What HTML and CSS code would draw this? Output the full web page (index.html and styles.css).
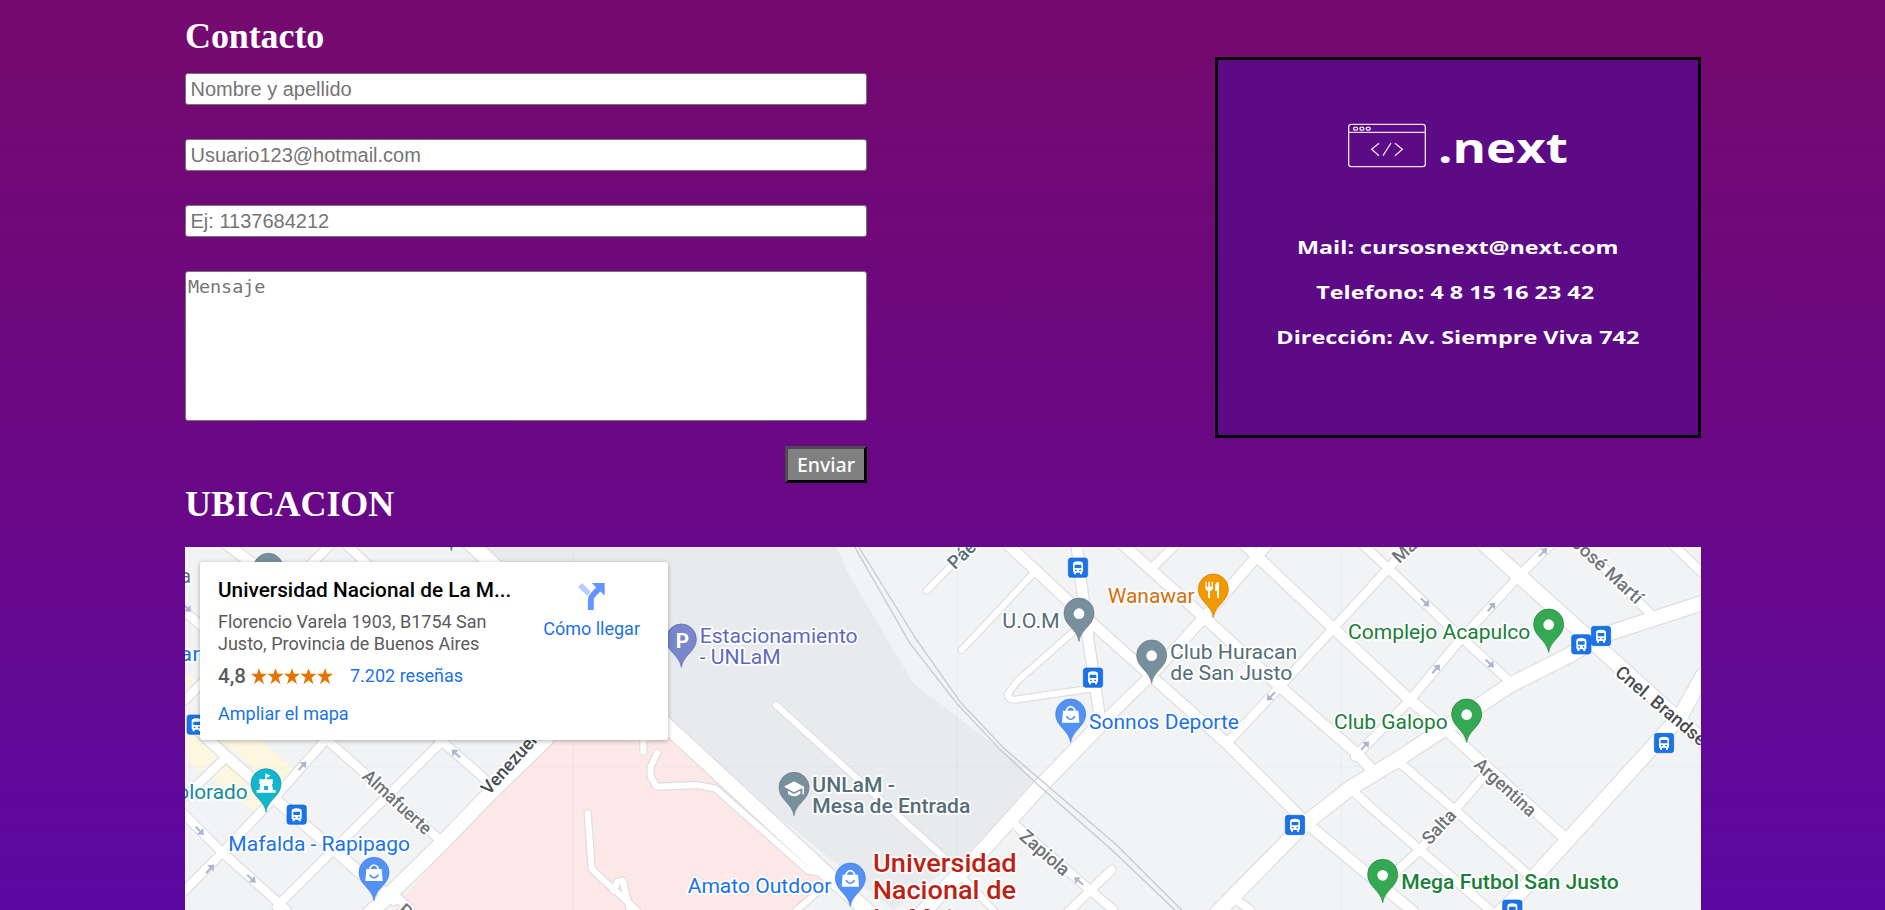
FILE: index.html
```html
<!DOCTYPE html>
<html lang="es">
<head>
<meta charset="utf-8">
<title>Contacto</title>
<link rel="stylesheet" href="styles.css">
</head>
<body>
<main class="page">
  <section class="contact">
    <form class="form">
      <h2 class="title">Contacto</h2>
      <input class="field" type="text" placeholder="Nombre y apellido">
      <input class="field" type="text" placeholder="Usuario123@hotmail.com">
      <input class="field" type="text" placeholder="Ej: 1137684212">
      <textarea class="message" placeholder="Mensaje"></textarea>
      <button class="send" type="button">Enviar</button>
    </form>
    <div class="card">
      <svg class="card-art" viewBox="54 60 1440 1125">
        <g class="logo">
          <rect x="446" y="253" width="230" height="127" rx="8"/>
          <path d="M446 277H676"/>
          <ellipse cx="467" cy="266" rx="6" ry="4.500"/><ellipse cx="486" cy="266" rx="6" ry="4.500"/><ellipse cx="505" cy="266" rx="6" ry="4.500"/>
          <path d="M537 310L515 328L537 347M573 309L549 347M585 310L607 328L585 347"/>
        </g>
        <text class="brand" x="714" y="369" textLength="390" lengthAdjust="spacingAndGlyphs">.next</text>
        <g class="info">
          <text x="291" y="642" textLength="964" lengthAdjust="spacingAndGlyphs">Mail: cursosnext@next.com</text>
          <text x="349" y="777" textLength="833" lengthAdjust="spacingAndGlyphs">Telefono: 4 8 15 16 23 42</text>
          <text x="229" y="912" textLength="1089" lengthAdjust="spacingAndGlyphs">Dirección: Av. Siempre Viva 742</text>
        </g>
      </svg>
    </div>
  </section>
  <h2 class="title location">UBICACION</h2>
  <section class="map">
    <svg class="map-art" viewBox="15 21 4548 1089">
      <defs>
        <g id="path-roads">
          <path d="M1390 590V635M1432 638L1412 680V710L1430 740L1550 735L1605 745L1885 992L1940 1000M1223 820L1235 985L1248 1000L1370 1110M1300 1052L1312 1025L1328 1022L1350 1110"/>
          <path d="M1788 495L2290 950L2440 1110M2240 152L2370 21M2565 95L2345 330M2680 275L2510 425L2483 463Q2485 480 2505 479L2740 445M1920 1050L1850 1110"/>
        </g>
        <g id="small-roads">
          <path d="M15 215L90 280M450 15L385 80M500 15L580 90M790 600L290 1100M770 590L935 735M15 825L130 940L320 1110M15 770L140 650M15 480L80 415M445 590L300 755L130 935L0 1065M430 590L780 900M2500 850L2730 1050L2800 1110M2795 990L2665 1115M2980 21L2915 85M4480 15L4563 95M3170 1080L3210 1110M640 1060L690 1110"/>
          <path d="M3140 610L3300 440L3460 265L3625 85L3690 15M3550 15L3630 90L3840 290L3990 425M4110 15L4020 105L3840 300L3690 480L3525 650M4410 220L4200 15M3650 660L3830 815L4040 1000M3920 700L3720 930L3600 1040M3510 745L3570 800L3720 930L3930 1110"/>
        </g>
        <g id="mid-roads">
          <path d="M130 5L230 80M60 575L140 650L300 790L560 1015L640 1080M2485 15L2720 235L2910 405L3140 610L3380 850L3560 1000L3700 1115M2830 15L3070 230L3300 440L3530 640L3590 705M3195 15L3460 265L3690 480L3810 580L4150 890M2760 555L2920 400L3070 235L3230 50L3260 15"/>
          <path d="M2690 15L2725 300L2760 535"/>
        </g>
        <g id="big-roads">
          <path d="M860 0L1464 560L1950 1010L2070 1120M1100 595L930 760L780 915L570 1120M2760 555L2580 740L2400 940L2320 1020L2230 1115M3915 15L4210 280L4580 615M4570 188L4270 285L4170 345L3990 435L3810 555L3650 660L3510 745L3370 855L3110 1120M4570 405L4500 530L4000 1080L3960 1120"/>
        </g>
        <path id="pin" d="M0 85C-5 48-45 38-45 0A45 45 0 0 1 45 0C45 38 5 48 0 85Z"/>
        <g id="bag"><path fill="#fff" d="M-23-10H23L26 26H-26Z"/><path class="bag-line" d="M-12-8V-14Q0-30 12-14V-8"/><path class="bag-smile" d="M-13 7Q0 26 13 7"/></g>
        <g id="bus"><rect class="bus-bg" x="-29" y="-29" width="58" height="58" rx="8"/><path fill="#fff" fill-rule="evenodd" d="M-15-11Q-15-19 0-19T15-11V11Q15 14 12 15V20H6V15H-6V20H-12V15Q-15 14-15 11ZM-10-9V1H10V-9ZM-9 6V10H-4V6ZM4 6V10H9V6Z"/></g>
        <path id="arrow" d="M-17-3H2V-13L18 0L2 13V3H-17Z"/>
      </defs>
      <rect class="land" x="15" y="21" width="4548" height="1089"/>
      <path class="campus" d="M880 21H1970L2010 110L2200 430L2510 665L2570 740L2340 960L2140 1110L1464 560Z"/>
      <path class="hospital" d="M640 1110L930 770L1100 590H1480L1950 1010L1850 1110Z"/>
      <path class="shops" d="M15 395L80 450V600L130 640L60 695L15 650V530L60 540V470L15 490ZM80 590H230L345 690L300 745L145 620ZM140 655L275 775L225 818L95 712Z"/>
      <path class="grid" d="M28 21V1110M1180 21V1110M2332 21V1110M3484 21V1110M15 680H4563"/>
      <g class="road casing"><use href="#path-roads" class="w-path"/><use href="#small-roads" class="w-small"/><use href="#mid-roads" class="w-mid"/><use href="#big-roads" class="w-big"/></g>
      <g class="road"><use href="#path-roads" class="w-path"/><use href="#small-roads" class="w-small"/><use href="#mid-roads" class="w-mid"/><use href="#big-roads" class="w-big"/></g>
      <path class="rail" d="M2024 21L2190 310L2330 490L2460 628L2585 745L2790 925L2985 1110M2036 21L2210 300L2340 485L2475 628L2600 735L2810 915L3005 1110"/>
      <g class="arrows">
        <use href="#arrow" transform="translate(367 678) rotate(-47)"/><use href="#arrow" transform="translate(90 987) rotate(-47)"/>
        <use href="#arrow" transform="translate(59 872) rotate(45)"/><use href="#arrow" transform="translate(214 1016) rotate(42)"/>
        <use href="#arrow" transform="translate(828 641) rotate(-137)"/><use href="#arrow" transform="translate(20 203) rotate(45)"/>
        <use href="#arrow" transform="translate(2696 1023) rotate(-140)"/><use href="#arrow" transform="translate(3273 469) rotate(135)"/>
        <use href="#arrow" transform="translate(3555 617) rotate(-47)"/><use href="#arrow" transform="translate(3735 187) rotate(43)"/>
        <use href="#arrow" transform="translate(3934 201) rotate(-50)"/><use href="#arrow" transform="translate(4089 37) rotate(-45)"/>
        <use href="#arrow" transform="translate(3929 370) rotate(43)"/><use href="#arrow" transform="translate(3768 387) rotate(-50)"/>
      </g>
      <g class="label street">
        <text transform="translate(544 713) rotate(42.500)" textLength="258" lengthAdjust="spacingAndGlyphs">Almafuerte</text>
        <text class="dark" transform="translate(927 767) rotate(-48)" textLength="248" lengthAdjust="spacingAndGlyphs">Venezuela</text>
        <text transform="translate(2515 894) rotate(41)" textLength="178" lengthAdjust="spacingAndGlyphs">Zapiola</text>
        <text class="teal" transform="translate(2325 91) rotate(-45)">Páez</text>
        <text transform="translate(3658 73) rotate(-43)">Martín</text>
        <text transform="translate(4171 14) rotate(42.500)" textLength="268" lengthAdjust="spacingAndGlyphs">José Martí</text>
        <text class="dark" transform="translate(4302 403) rotate(40)" textLength="368" lengthAdjust="spacingAndGlyphs">Cnel. Brandsen</text>
        <text transform="translate(3879 678) rotate(42.500)" textLength="230" lengthAdjust="spacingAndGlyphs">Argentina</text>
        <text transform="translate(3749 917) rotate(-47)" textLength="121" lengthAdjust="spacingAndGlyphs">Salta</text>
        <text transform="translate(650 1115) rotate(42)">Perú</text>
      </g>
      <g class="label">
        <text class="slate" x="-20" y="129">ta</text>
        <text class="blue" x="-18" y="363" textLength="78" lengthAdjust="spacingAndGlyphs">lar</text>
        <text class="cyan" x="-8" y="776" textLength="211" lengthAdjust="spacingAndGlyphs">olorado</text>
        <text class="blue" x="145" y="932" textLength="545" lengthAdjust="spacingAndGlyphs">Mafalda - Rapipago</text>
        <text class="indigo" x="1559" y="309" textLength="474" lengthAdjust="spacingAndGlyphs">Estacionamiento</text>
        <text class="indigo" x="1559" y="373" textLength="243" lengthAdjust="spacingAndGlyphs">- UNLaM</text>
        <text class="slate medium" x="1897" y="755" textLength="248" lengthAdjust="spacingAndGlyphs">UNLaM -</text>
        <text class="slate medium" x="1897" y="819" textLength="474" lengthAdjust="spacingAndGlyphs">Mesa de Entrada</text>
        <text class="blue" x="1523" y="1059" textLength="431" lengthAdjust="spacingAndGlyphs">Amato Outdoor</text>
        <text class="slate" x="2467" y="263" textLength="172" lengthAdjust="spacingAndGlyphs">U.O.M</text>
        <text class="orange" x="2783" y="190" textLength="261" lengthAdjust="spacingAndGlyphs">Wanawar</text>
        <text class="slate" x="2970" y="357" textLength="382" lengthAdjust="spacingAndGlyphs">Club Huracan</text>
        <text class="slate" x="2971" y="420" textLength="366" lengthAdjust="spacingAndGlyphs">de San Justo</text>
        <text class="blue" x="2727" y="566" textLength="450" lengthAdjust="spacingAndGlyphs">Sonnos Deporte</text>
        <text class="green" x="3504" y="296" textLength="547" lengthAdjust="spacingAndGlyphs">Complejo Acapulco</text>
        <text class="green" x="3462" y="567" textLength="341" lengthAdjust="spacingAndGlyphs">Club Galopo</text>
        <text class="green medium" x="3664" y="1048" textLength="652" lengthAdjust="spacingAndGlyphs">Mega Futbol San Justo</text>
        <g class="red"><text x="2079" y="996" textLength="431" lengthAdjust="spacingAndGlyphs">Universidad</text><text x="2078" y="1078" textLength="430" lengthAdjust="spacingAndGlyphs">Nacional de</text><text x="2080" y="1160">La Matanza</text></g>
      </g>
      <g class="pins">
        <use href="#pin" x="265" y="85" class="p-slate"/><circle cx="265" cy="85" r="16"/>
        <use href="#pin" x="814" y="-52" class="p-slate"/>
        <use href="#pin" x="258" y="731" class="p-cyan"/>
        <path fill="#fff" fill-rule="evenodd" d="M256 700L272 707L260 713V718H278V732H276L279 750H287V758H230V750H238L241 732H238V718H256ZM252 738V750H264V738Z"/>
        <use href="#pin" x="582" y="997" class="p-blue"/><use href="#bag" x="582" y="997"/>
        <use href="#pin" x="1504" y="297" class="p-indigo"/><text class="parking" x="1487" y="323">P</text>
        <use href="#pin" x="1842" y="742" class="p-slate"/>
        <path fill="#fff" d="M1812 740L1842 724L1872 740V763H1867V744L1842 757ZM1824 752L1842 762L1861 752V761Q1842 777 1824 761Z"/>
        <use href="#pin" x="2011" y="1014" class="p-blue"/><use href="#bag" x="2011" y="1014"/>
        <use href="#pin" x="2697" y="219" class="p-slate"/><circle cx="2697" cy="221" r="16"/>
        <use href="#pin" x="3100" y="147" class="p-orange"/>
        <path fill="#fff" d="M3076 125H3080V140H3085V125H3090V140H3095V125H3099V143Q3098 152 3090 153V174H3084V153Q3077 152 3076 143ZM3106 133Q3108 126 3117 126V174H3111V153H3105Z"/>
        <use href="#pin" x="2915" y="345" class="p-slate"/><circle cx="2915" cy="347" r="16"/>
        <use href="#pin" x="2672" y="522" class="p-blue"/><use href="#bag" x="2672" y="522"/>
        <use href="#pin" x="4106" y="252" class="p-green"/><circle cx="4106" cy="254" r="16"/>
        <use href="#pin" x="3860" y="522" class="p-green"/><circle cx="3860" cy="524" r="16"/>
        <use href="#pin" x="3608" y="1003" class="p-green"/><circle cx="3608" cy="1006" r="16"/>
        <use href="#bus" x="50" y="554"/><use href="#bus" x="350" y="824"/><use href="#bus" x="2694" y="83"/><use href="#bus" x="2739" y="413"/><use href="#bus" x="3345" y="855"/>
        <use href="#bus" x="4204" y="313"/><use href="#bus" x="4263" y="288"/><use href="#bus" x="4452" y="609"/><use href="#bus" x="3997" y="1109"/>
      </g>
    </svg>
    <div class="place">
      <div class="details">
        <div class="name">Universidad Nacional de La M...</div>
        <div class="address">Florencio Varela 1903, B1754 San<br>Justo, Provincia de Buenos Aires</div>
        <div class="rating">
          <span class="score">4,8</span>
          <svg class="stars" viewBox="0 0 246 50"><defs><path id="star" d="M24 0L30 17H48L33 29L39 48L24 36L9 48L15 29L0 17H18Z"/></defs><use href="#star"/><use href="#star" x="49.500"/><use href="#star" x="99"/><use href="#star" x="148.500"/><use href="#star" x="198"/></svg>
          <span class="link">7.202 reseñas</span>
        </div>
        <div class="link">Ampliar el mapa</div>
      </div>
      <div class="directions">
        <svg class="fork" viewBox="0 0 82 82"><path fill="#b3ccff" d="M0 12L12 0L38 26L28 39Z"/><path fill="#6394ff" d="M42 0H81V38L68 26L51 43Q48 46 48 52V82H30V50Q30 41 37 33L55 14Z"/></svg>
        <span class="link">Cómo llegar</span>
      </div>
    </div>
  </section>
</main>
</body>
</html>
```
FILE: styles.css
```css
* { box-sizing: border-box; }
body {
  margin: 0;
  height: 910px;
  overflow: hidden;
  background: linear-gradient(#750a6e, #6a0884 50%, #5b08a3);
}
.page { width: 1516px; margin-left: 185px; padding-top: 16px; }
.contact { display: flex; justify-content: space-between; align-items: flex-start; height: 468px; }
.title { margin: 0; color: #fff; font: bold 36px/41px "Liberation Serif", serif; letter-spacing: -.1px; }
.location { height: 63px; }

.form { width: 682px; display: flex; flex-direction: column; }
.form .title { margin-bottom: 16px; }
.field, .message {
  width: 100%;
  border: 1px solid #767676;
  border-radius: 3px;
  background: #fff;
  outline: 0;
}
.field { height: 32px; margin: 0 0 34px; padding: 1px 4.5px; font: 20px "Liberation Sans", sans-serif; }
.message { height: 150px; padding: 3px 2px; resize: none; font: 18.5px/24px "DejaVu Sans Mono", monospace; letter-spacing: -.1px; }
.field::placeholder, .message::placeholder { color: #757575; }
.send {
  align-self: flex-end;
  width: 82px;
  height: 37px;
  margin-top: 25px;
  padding: 0;
  border: 3px outset #000;
  border-color: #4c4c4c #000 #000 #4c4c4c;
  background: #808080;
  color: #fff;
  font: 500 19.5px "Comic Sans MS", "Noto Sans", sans-serif;
}

.card { width: 486px; height: 381px; margin-top: 41px; border: 3px solid #000; background: #5c0a85; }
.card-art { display: block; width: 100%; height: 100%; }
.logo { fill: none; stroke: #eee3f4; stroke-width: 4; }
.brand { fill: #fff; font: bold 126px "Open Sans", sans-serif; }
.info { fill: #fff; font: bold 55px "Open Sans", sans-serif; }

.map { position: relative; height: 363px; overflow: hidden; background: #f1f3f4; }
.map-art { display: block; width: 1516px; height: 363px; }
.land { fill: #f1f3f4; }
.campus { fill: #e8eaed; }
.hospital { fill: #fce8e6; }
.shops { fill: #fef7e0; }
.grid { fill: none; stroke: #000; stroke-opacity: .03; stroke-width: 3; }
.road { fill: none; stroke: #fff; stroke-linecap: round; stroke-linejoin: round; --edge: 0px; }
.casing { stroke: #dcdee2; --edge: 7px; }
.w-path { stroke-width: calc(18px + var(--edge)); }
.w-small { stroke-width: calc(25px + var(--edge)); }
.w-mid { stroke-width: calc(31px + var(--edge)); }
.w-big { stroke-width: calc(43px + var(--edge)); }
.rail { fill: none; stroke: #c8cbce; stroke-width: 4; }
.arrows { fill: #afb4d2; }
.label { font: 61px Roboto, sans-serif; stroke: #fff; stroke-width: 11; stroke-linejoin: round; paint-order: stroke; }
.street { font-size: 55px; font-weight: 500; fill: #6d7378; }
.dark { fill: #474c51; }
.medium { font-weight: 500; }
.blue { fill: #1a73e8; }
.teal, .slate { fill: #546e7a; }
.cyan { fill: #128b96; }
.indigo { fill: #5c6bc0; }
.orange { fill: #d56e0c; }
.green { fill: #188038; }
.red { fill: #c01f14; font-size: 79px; font-weight: 500; }
.pins { fill: #fff; }
.p-slate { fill: #78909c; stroke: #607783; stroke-width: 2; }
.p-blue { fill: #5491f5; stroke: #3b78e7; stroke-width: 2; }
.p-cyan { fill: #12b5cb; stroke: #0797a9; stroke-width: 2; }
.p-indigo { fill: #7986cb; stroke: #5362b5; stroke-width: 2; }
.p-orange { fill: #f29900; stroke: #da7200; stroke-width: 2; }
.p-green { fill: #34a853; stroke: #188038; stroke-width: 2; }
.bag-line { fill: none; stroke: #fff; stroke-width: 5; }
.bag-smile { fill: none; stroke: #5491f5; stroke-width: 5; }
.bus-bg { fill: #1a73e8; stroke: #1765cc; stroke-width: 2; }
.parking { font: bold 62px Roboto, sans-serif; }

.place {
  position: absolute;
  left: 15px;
  top: 15px;
  width: 468px;
  height: 178px;
  padding: 15px 28px 0 18px;
  display: flex;
  justify-content: space-between;
  border-radius: 3px;
  background: #fff;
  box-shadow: 0 1px 5px rgba(0, 0, 0, .3);
  font: 18px/22px Roboto, sans-serif;
  white-space: nowrap;
}
.name { color: #000; font-size: 20.8px; font-weight: 500; line-height: 26px; }
.address { margin-top: 8px; color: #5b5b5b; }
.rating { display: flex; align-items: center; height: 24px; margin: 9px 0 15px; }
.score { width: 33px; color: #5b5b5b; font-size: 20.5px; font-weight: 500; }
.stars { width: 82px; height: 17px; margin-right: 17px; fill: #e37400; }
.link { color: #1a73e8; }
.directions { display: flex; flex-direction: column; align-items: center; padding-top: 6px; gap: 8px; }
.fork { width: 27px; height: 27px; }
```
